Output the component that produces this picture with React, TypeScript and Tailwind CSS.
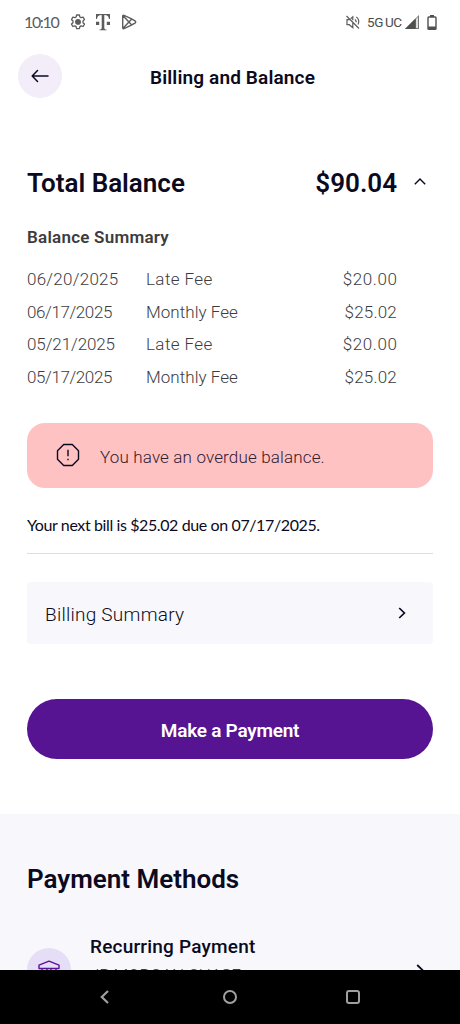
import { FC, ReactNode } from "react";

const fees = [
	{
		date: "06/20/2025",
		label: "Late Fee",
		amount: "$20.00",
		dateClass: "tracking-[0.25px]",
		labelClass: "tracking-[0.4px]",
		amountClass: "tracking-[0.6px] -mr-[0.6px]",
	},
	{
		date: "06/17/2025",
		label: "Monthly Fee",
		amount: "$25.02",
		dateClass: "tracking-[-0.4px]",
		labelClass: "tracking-[0.05px]",
		amountClass: "tracking-[0.2px]",
	},
	{
		date: "05/21/2025",
		label: "Late Fee",
		amount: "$20.00",
		dateClass: "tracking-[-0.1px]",
		labelClass: "tracking-[0.4px]",
		amountClass: "tracking-[0.6px] -mr-[0.6px]",
	},
	{
		date: "05/17/2025",
		label: "Monthly Fee",
		amount: "$25.02",
		dateClass: "tracking-[-0.4px]",
		labelClass: "tracking-[0.05px]",
		amountClass: "tracking-[0.2px]",
	},
];

const Icon: FC<{
	className?: string;
	viewBox?: string;
	strokeWidth?: number;
	children: ReactNode;
}> = ({ className, viewBox = "0 0 24 24", strokeWidth = 2, children }) => (
	<svg
		className={className}
		viewBox={viewBox}
		fill="none"
		stroke="currentColor"
		strokeWidth={strokeWidth}
	>
		{children}
	</svg>
);

const StatusBar = () => (
	<div className="flex h-[45px] shrink-0 items-center pb-px pl-6 pr-[23px] text-[#5c5c5c]">
		<span className="w-[46px] whitespace-nowrap font-['Lato'] text-[16px] tracking-[-1.35px]">
			10:10
		</span>
		<Icon className="size-4 shrink-0" viewBox="0 0 16 16" strokeWidth={1.3}>
			<path
				d="M6.600 1h2.800l.5 2 1.200.7 2-.6 1.400 2.400-1.500 1.400v1.800l1.500 1.400-1.400 2.400-2-.6-1.200.7-.5 2H6.600l-.5-2-1.200-.7-2 .6-1.400-2.400L3 8.700V6.900L1.500 5.500l1.400-2.400 2 .6L6.100 3z"
				strokeLinejoin="round"
			/>
			<circle cx="8" cy="7.900" r="2.300" fill="currentColor" />
		</Icon>
		<svg
			className="ml-[10px] h-[18px] w-[14px] shrink-0"
			viewBox="0 0 14 18"
			fill="currentColor"
		>
			<path d="M0 1h14v5h-1C12.700 3.300 11.500 2.200 8.300 2.100V14.500c0 1.600.5 2 2.200 2v.8h-7v-.8c1.700 0 2.200-.4 2.200-2V2.100C2.500 2.200 1.300 3.300 1 6H0z" />
			<path d="M0 8.700h3.200v3.200H0zM10.800 8.700H14v3.200h-3.200z" />
		</svg>
		<Icon
			className="ml-[11px] size-4 shrink-0"
			viewBox="0 0 16 16"
			strokeWidth={1.4}
		>
			<path
				d="M1.700 2.200v11.600c0 .8.6 1.100 1.300.8 3.800-1.600 7.600-3.300 11-5.400.9-.6.9-1.800 0-2.400C10.600 4.700 6.800 3 3 1.400c-.7-.3-1.300 0-1.300.8zM2.300 2l8.200 8.800M2.300 14l8.200-8.800"
				strokeLinejoin="round"
			/>
		</Icon>
		<Icon
			className="ml-auto size-4 shrink-0"
			viewBox="0 0 16 16"
			strokeWidth={1.2}
		>
			<path d="M1.500 2l12.500 12.500M5 5.700H2v5h2.300l3.500 3V9M5.700 4.700l2.100-1.900v3.500M10 5.500c.8.600 1.200 1.500 1.200 2.800M11.300 3c2.200 1.200 3.300 4.500 1.800 7.500" />
		</Icon>
		<span className="ml-[6px] w-[37px] whitespace-nowrap font-['Roboto'] text-[13.5px] leading-4 tracking-[-0.4px] text-[#4c4c4c]">
			5G<span className="ml-[2px]">UC</span>
		</span>
		<svg className="ml-px h-[14px] w-[14px] shrink-0" viewBox="0 0 14 14">
			<path d="M0 14L14 0v14z" fill="#777" />
			<path d="M0 14L10.500 3.500V14z" fill="#4f4f4f" />
			<path d="M11 4l2-2V13h-2z" fill="#ddd" />
		</svg>
		<svg className="ml-[8px] h-[15px] w-[10px] shrink-0" viewBox="0 0 10 15">
			<path d="M3 0h4v2H3z" fill="#505050" />
			<rect
				x="1"
				y="2"
				width="8"
				height="12.200"
				rx=".8"
				fill="none"
				stroke="#505050"
				strokeWidth="1.400"
			/>
			<path d="M1 11.500h8V14H1z" fill="#505050" />
		</svg>
	</div>
);

const Header = () => (
	<div className="grid h-[62px] shrink-0 grid-cols-[44px_1fr_44px] items-center px-[18px]">
		<button className="flex size-[44px] items-center justify-center rounded-full bg-[#f2edf8]">
			<Icon
				className="h-[14px] w-[18px]"
				viewBox="0 0 18 14"
				strokeWidth={1.5}
			>
				<path
					d="M17 7H1.500M6.500 1.500L1.200 7l5.300 5.500"
					strokeLinecap="round"
					strokeLinejoin="round"
				/>
			</Icon>
		</button>
		<h1 className="whitespace-nowrap pl-[5px] pt-[4px] text-center text-[19px] font-semibold tracking-[0.14px]">
			Billing and Balance
		</h1>
	</div>
);

const Balance = () => (
	<section className="mt-[57px]">
		<div className="flex h-[38px] items-center justify-between pr-[7px] text-[26px] font-semibold">
			<h2>Total Balance</h2>
			<div className="flex items-center">
				<span>$90.04</span>
				<Icon
					className="ml-[17px] mb-1 h-[7px] w-[12px]"
					viewBox="0 0 12 7"
					strokeWidth={1.4}
				>
					<path d="M.8 6.200L6 1l5.200 5.200" />
				</Icon>
			</div>
		</div>
		<h3 className="mt-[22px] text-[17px] font-semibold leading-[26px] tracking-[0.24px] text-[#3c3c3e]">
			Balance Summary
		</h3>
		<ul className="mt-[13px] text-[17px] font-light leading-[32.5px] text-[#3c3c3e]">
			{fees.map((fee) => (
				<li key={fee.date} className="flex pr-9">
					<span className="w-[119px]">
						<span className={fee.dateClass}>{fee.date}</span>
					</span>
					<span className={fee.labelClass}>{fee.label}</span>
					<span className="ml-auto">
						<span className={fee.amountClass}>{fee.amount}</span>
					</span>
				</li>
			))}
		</ul>
	</section>
);

const BottomNav = () => (
	<nav className="grid h-[54px] shrink-0 grid-cols-[104px_126px_123px] bg-black text-[#a0a0a0]">
		<div className="flex items-center justify-end">
			<Icon
				className="-mr-[5px] h-[14px] w-[9px]"
				viewBox="0 0 9 14"
				strokeWidth={2.2}
			>
				<path d="M8 1L1.800 7 8 13" />
			</Icon>
		</div>
		<div className="flex items-center justify-end">
			<div className="-mr-[7px] size-[14px] rounded-full border-2 border-current" />
		</div>
		<div className="flex items-center justify-end">
			<div className="-mr-[7px] size-[14px] rounded-[3px] border-2 border-current" />
		</div>
	</nav>
);

const App = () => {
	return (
		<div className="flex h-[1024px] w-[460px] flex-col overflow-hidden bg-white font-['Roboto',sans-serif] text-[#0b0a20]">
			<StatusBar />
			<Header />
			<main className="min-h-0 flex-1 overflow-hidden">
				<div className="px-[27px]">
					<Balance />
					<div className="mt-[30px] flex h-[65px] items-center rounded-[18px] bg-[#ffc2c2] pl-[29px]">
						<Icon className="mb-px size-6" strokeWidth={1.4}>
							<path
								d="M7.700 1.500h8.600l6.200 6.200v8.600l-6.200 6.200H7.700l-6.200-6.200V7.700z"
								strokeLinejoin="round"
							/>
							<path d="M12 6.800v6.400M12 15.700v1.600" />
						</Icon>
						<p className="ml-5 mt-[5px] whitespace-nowrap text-[17px] font-light tracking-[0.15px] text-[#33202f]">
							You have an overdue balance.
						</p>
					</div>
					<p className="mt-[25px] whitespace-nowrap font-['Lato'] text-[16px] leading-6 tracking-[-0.39px]">
						Your next bill is $25.02 due on 07/17/2025.
					</p>
					<hr className="mt-4 border-t-[1.5px] border-[#dededf]" />
					<button className="mt-[28px] flex h-[62px] w-full items-center justify-between rounded-[4px] bg-[#f7f7fc] pl-[18px] pr-[27px]">
						<span className="mt-1 text-[19px] font-light tracking-[0.25px]">
							Billing Summary
						</span>
						<Icon
							className="h-[12px] w-[8px]"
							viewBox="0 0 8 12"
							strokeWidth={1.7}
						>
							<path d="M1.200 1L6.400 6 1.200 11" />
						</Icon>
					</button>
					<button className="mt-[55px] flex h-[60px] w-full items-center justify-center rounded-full bg-[#561392] pt-1 text-[19px] font-semibold tracking-[-0.25px] text-white">
						Make a Payment
					</button>
				</div>
				<section className="mt-[55px] bg-[#f7f7fc] px-[27px] pt-[46px]">
					<h2 className="text-[26px] font-semibold leading-[38px]">
						Payment Methods
					</h2>
					<div className="mt-[36px] flex">
						<div className="mt-[14px] flex size-[44px] items-center justify-center rounded-full bg-[#e6ddf6] text-[#5a149a]">
							<Icon
								className="mt-px size-[22px]"
								viewBox="0 0 22 22"
								strokeWidth={1.4}
							>
								<path
									d="M11 1.200L1 5.200v3.300h20V5.200zM4 8.500V18M9 8.500V18M13 8.500V18M18 8.500V18M1 18h20v3H1z"
									strokeLinejoin="round"
								/>
							</Icon>
						</div>
						<div className="ml-[19px] whitespace-nowrap">
							<p className="text-[19px] font-medium leading-[26px] tracking-[0.2px]">
								Recurring Payment
							</p>
							<p className="mt-[3px] text-[17px] font-light leading-6 tracking-[-0.15px] text-[#3c3c3e]">
								JP MORGAN CHASE
							</p>
						</div>
						<Icon
							className="ml-auto mr-[9px] mt-[30px] h-[12px] w-[8px]"
							viewBox="0 0 8 12"
							strokeWidth={1.8}
						>
							<path d="M1.200 1L6.400 6 1.200 11" />
						</Icon>
					</div>
				</section>
			</main>
			<BottomNav />
		</div>
	);
};

export default App;
